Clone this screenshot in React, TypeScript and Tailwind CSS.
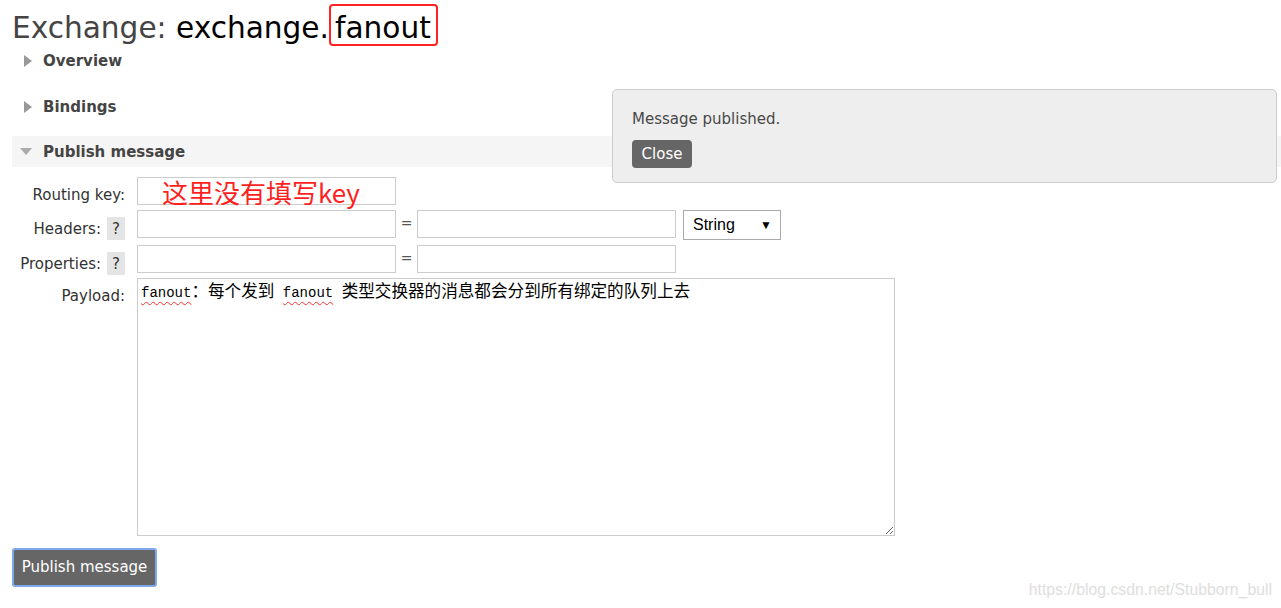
import React from 'react';

const latin = "font-['Liberation_Mono',monospace] text-[14px]";
const cjk = "font-['Noto_Sans_CJK_SC',sans-serif] text-[16.6px]";
const squiggle = 'underline decoration-wavy decoration-[#e33] decoration-1 underline-offset-[4px]';

function SectionHeader({ title, open = false }: { title: string; open?: boolean }) {
  return (
    <div
      className={`ml-[12px] flex h-[31px] items-center ${open ? 'bg-[#f5f5f5]' : ''}`}
    >
      <div className="ml-[8px] flex w-[12px] justify-end">
        {open ? (
          <div className="h-0 w-0 border-x-[6px] border-t-[7px] border-x-transparent border-t-[#aaa]" />
        ) : (
          <div className="h-0 w-0 border-y-[6px] border-l-[8px] border-y-transparent border-l-[#999]" />
        )}
      </div>
      <span className="ml-[11px] pt-px text-[15px] font-bold text-[#444]">{title}</span>
    </div>
  );
}

function HelpBox() {
  return (
    <span className="ml-[6px] flex h-[23px] w-[18px] items-center justify-center bg-[#e4e4e4] text-[15px] text-[#333]">
      ?
    </span>
  );
}

function Label({ children }: { children: React.ReactNode }) {
  return (
    <div className="flex w-[125px] shrink-0 items-center justify-end self-start pt-[7px] text-[15px] leading-[22px] text-[#333]">
      {children}
    </div>
  );
}

function TextBox({ children }: { children?: React.ReactNode }) {
  return (
    <div className="h-[28px] w-[259px] shrink-0 border border-[#ccc] bg-white">{children}</div>
  );
}

export default function App() {
  return (
    <div className="relative min-h-[608px] w-full overflow-hidden bg-white font-['DejaVu_Sans',sans-serif]">
      {/* title */}
      <div className="h-[45px] pl-[12px] pt-[4px]">
        <h1 className="flex items-baseline text-[29.6px] leading-[31px] text-black">
          <span>
            <span className="text-[#444]">Exchange:</span> exchange.
          </span>
          <span className="inline-block rounded-[4px] border-2 border-[#f22] pl-[4px] pr-[5px] pt-[7px]">
            fanout
          </span>
        </h1>
      </div>

      <div className="flex flex-col gap-[15px]">
        <SectionHeader title="Overview" />
        <SectionHeader title="Bindings" />
        <div className="-mt-px">
          <SectionHeader title="Publish message" open />
        </div>
      </div>

      {/* form */}
      <div className="mt-[10px] flex flex-col gap-[5px]">
        <div className="flex h-[28px]">
          <Label>Routing key:</Label>
          <div className="ml-[12px]">
            <TextBox>
              <div className="whitespace-nowrap pl-[24px] font-['Noto_Sans_CJK_SC',sans-serif] text-[26px] leading-[27px] text-[#ff1f1f]">
                这里没有填写key
              </div>
            </TextBox>
          </div>
        </div>

        <div className="flex h-[30px]">
          <Label>
            Headers:
            <HelpBox />
          </Label>
          <div className="ml-[12px] flex items-start">
            <TextBox />
            <span className="w-[21px] pt-[3px] text-center text-[14px] text-[#555]">=</span>
            <TextBox />
            <div className="ml-[7px] flex h-[30px] w-[98px] items-center justify-between border border-[#aaa] bg-white pl-[9px] pr-[8px] font-['Liberation_Sans',sans-serif] text-[16px] text-black">
              <span>String</span>
              <span className="text-[12px]">▼</span>
            </div>
          </div>
        </div>

        <div className="flex h-[28px]">
          <Label>
            Properties:
            <HelpBox />
          </Label>
          <div className="ml-[12px] flex items-start">
            <TextBox />
            <span className="w-[21px] pt-[3px] text-center text-[14px] text-[#555]">=</span>
            <TextBox />
          </div>
        </div>

        <div className="flex">
          <Label>Payload:</Label>
          <div className="ml-[12px] h-[258px] w-[758px] resize overflow-hidden border border-[#ccc] bg-white pl-[3px]">
            <div className="whitespace-nowrap leading-[22px] text-black">
              <span className={`${latin} ${squiggle}`}>fanout</span>
              <span className={cjk}>：每个发到</span>
              <span className={latin}>&nbsp;</span>
              <span className={`${latin} ${squiggle}`}>fanout</span>
              <span className={latin}>&nbsp;</span>
              <span className={cjk}>类型交换器的消息都会分到所有绑定的队列上去</span>
            </div>
          </div>
        </div>
      </div>

      <button className="ml-[12px] mt-[12px] h-[39px] w-[145px] rounded-[3px] border-2 border-[#7ea8ec] bg-[#666] text-[15px] text-white">
        Publish message
      </button>

      {/* notification */}
      <div className="absolute left-[612px] top-[89px] h-[94px] w-[665px] rounded-[5px] border border-[#ccc] bg-[#eee] pl-[19px] pt-[19px]">
        <p className="text-[15px] leading-[20px] text-[#484848]">Message published.</p>
        <button className="mt-[11px] h-[28px] w-[60px] rounded-[4px] bg-[#666] text-[15px] text-white">
          Close
        </button>
      </div>

      <div className="absolute bottom-[6px] right-[9px] font-['Liberation_Sans',sans-serif] text-[15.8px] text-[#dedede]">
        https://blog.csdn.net/Stubborn_bull
      </div>
    </div>
  );
}
